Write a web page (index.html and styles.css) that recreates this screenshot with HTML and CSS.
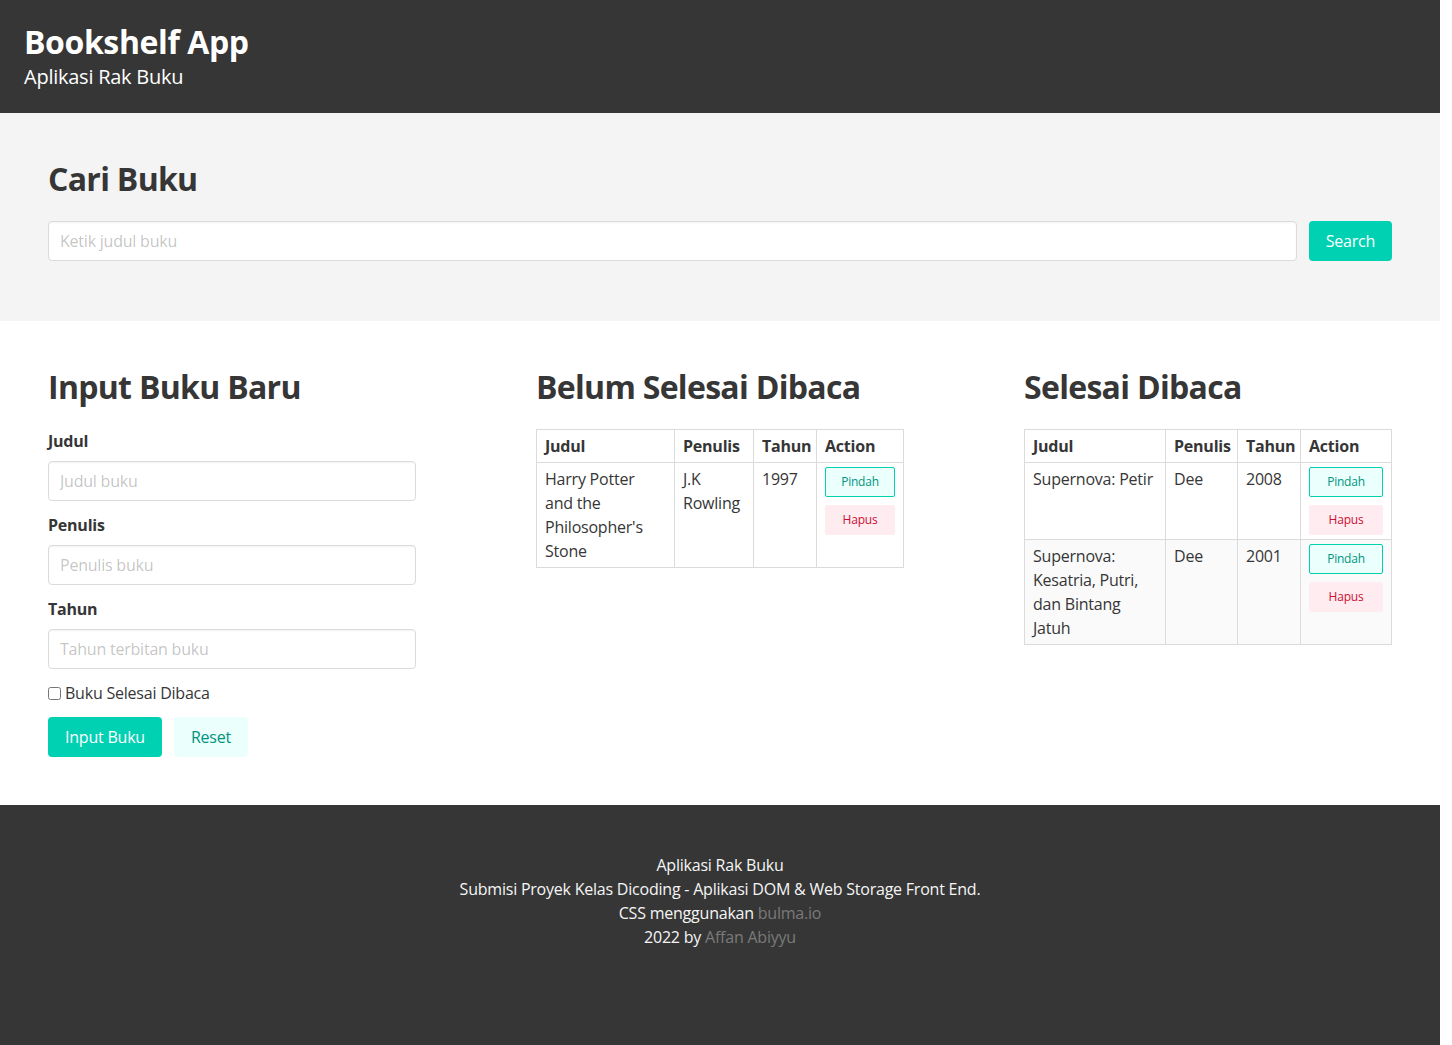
FILE: index.html
```html
<!DOCTYPE html>
<html lang="id">
<head>
<meta charset="utf-8">
<title>Bookshelf App</title>
<link rel="stylesheet" href="styles.css">
</head>
<body>
<div class="page">
  <header class="hero">
    <h1 class="hero-title">Bookshelf App</h1>
    <p class="hero-subtitle">Aplikasi Rak Buku</p>
  </header>

  <section class="search-section">
    <h2 class="title">Cari Buku</h2>
    <form class="search-form">
      <input class="input search-input" type="text" placeholder="Ketik judul buku">
      <button class="button is-primary" type="button">Search</button>
    </form>
  </section>

  <section class="main-section">
    <div class="columns">
      <div class="column">
        <h2 class="title">Input Buku Baru</h2>
        <form class="book-form">
          <div class="field">
            <label class="label">Judul</label>
            <input class="input" type="text" placeholder="Judul buku">
          </div>
          <div class="field">
            <label class="label">Penulis</label>
            <input class="input" type="text" placeholder="Penulis buku">
          </div>
          <div class="field">
            <label class="label">Tahun</label>
            <input class="input" type="number" placeholder="Tahun terbitan buku">
          </div>
          <div class="field">
            <label class="checkbox"><input type="checkbox"> Buku Selesai Dibaca</label>
          </div>
          <div class="buttons">
            <button class="button is-primary" type="button">Input Buku</button>
            <button class="button is-primary-light" type="button">Reset</button>
          </div>
        </form>
      </div>

      <div class="column">
        <h2 class="title">Belum Selesai Dibaca</h2>
        <table class="table">
          <colgroup>
            <col class="c-a1"><col class="c-a2"><col class="c-a3"><col>
          </colgroup>
          <thead>
            <tr><th>Judul</th><th>Penulis</th><th>Tahun</th><th>Action</th></tr>
          </thead>
          <tbody>
            <tr>
              <td>Harry Potter and the Philosopher's Stone</td>
              <td>J.K Rowling</td>
              <td>1997</td>
              <td><div class="actions"><button class="button is-small is-move" type="button">Pindah</button><button class="button is-small is-delete" type="button">Hapus</button></div></td>
            </tr>
          </tbody>
        </table>
      </div>

      <div class="column">
        <h2 class="title">Selesai Dibaca</h2>
        <table class="table">
          <colgroup>
            <col class="c-b1"><col class="c-b2"><col class="c-b3"><col>
          </colgroup>
          <thead>
            <tr><th>Judul</th><th>Penulis</th><th>Tahun</th><th>Action</th></tr>
          </thead>
          <tbody>
            <tr>
              <td>Supernova: Petir</td>
              <td>Dee</td>
              <td>2008</td>
              <td><div class="actions"><button class="button is-small is-move" type="button">Pindah</button><button class="button is-small is-delete" type="button">Hapus</button></div></td>
            </tr>
            <tr class="striped">
              <td>Supernova: Kesatria, Putri, dan Bintang Jatuh</td>
              <td>Dee</td>
              <td>2001</td>
              <td><div class="actions"><button class="button is-small is-move" type="button">Pindah</button><button class="button is-small is-delete" type="button">Hapus</button></div></td>
            </tr>
          </tbody>
        </table>
      </div>
    </div>
  </section>

  <footer class="footer">
    <p>Aplikasi Rak Buku</p>
    <p>Submisi Proyek Kelas Dicoding - Aplikasi DOM &amp; Web Storage Front End.</p>
    <p>CSS menggunakan <a href="#">bulma.io</a></p>
    <p>2022 by <a href="#">Affan Abiyyu</a></p>
  </footer>
</div>
</body>
</html>
```
FILE: styles.css
```css
*, *::before, *::after { box-sizing: border-box; }

html { background: #fff; }

body {
  margin: 0;
  font-family: "Open Sans", "Noto Sans", sans-serif;
  font-size: 16px;
  line-height: 24px;
  letter-spacing: -0.22px;
  color: #4a4a4a;
}

h1, h2, p { margin: 0; }

.page {
  width: 1440px;
}

/* Header */
.hero {
  background: #363636;
  padding: 24px 24px 24px;
}

.hero-title {
  color: #fff;
  font-size: 32px;
  line-height: 36px;
  font-weight: 700;
  letter-spacing: -0.4px;
}

.hero-subtitle {
  color: #fff;
  font-size: 20px;
  line-height: 25px;
  margin-top: 4px;
  letter-spacing: -0.25px;
}

.title {
  color: #363636;
  font-size: 32px;
  line-height: 36px;
  font-weight: 700;
  letter-spacing: -0.7px;
  margin-bottom: 24px;
}

/* Search */
.search-section {
  background: #f4f4f4;
  padding: 48px 48px 60px;
}

.search-form {
  display: flex;
  gap: 12px;
}

.search-input { flex: 1; }

/* Inputs */
.input {
  display: block;
  width: 100%;
  height: 40px;
  margin: 0;
  padding: 0 11px;
  border: 1px solid #dbdbdb;
  border-radius: 4px;
  background: #fff;
  box-shadow: inset 0 1px 2px rgba(10, 10, 10, 0.05);
  font: inherit;
  letter-spacing: -0.22px;
  color: #363636;
  -moz-appearance: textfield;
}

.input::-webkit-outer-spin-button,
.input::-webkit-inner-spin-button { -webkit-appearance: none; margin: 0; }

.input::placeholder { color: rgba(54, 54, 54, 0.3); }

/* Buttons */
.button {
  display: inline-flex;
  align-items: center;
  justify-content: center;
  height: 40px;
  margin: 0;
  padding: 0 16px;
  border: 1px solid transparent;
  border-radius: 4px;
  font: inherit;
  letter-spacing: -0.22px;
  cursor: pointer;
  white-space: nowrap;
}

.is-primary { background: #00d1b2; color: #fff; }
.is-primary-light { background: #ebfffc; color: #00947e; }

.button.is-small {
  height: 30px;
  font-size: 12px;
  line-height: 18px;
  border-radius: 2px;
  width: 100%;
  padding: 0 8px;
}

.is-move { background: #ebfffc; color: #00947e; border-color: #00d1b2; }
.is-delete { background: #feecf0; color: #cc0f35; }

/* Main section */
.main-section {
  background: #fff;
  padding: 48px;
}

.columns {
  display: grid;
  grid-template-columns: repeat(3, 368px);
  justify-content: space-between;
  align-items: start;
}

.field { margin-bottom: 12px; }

.label {
  display: block;
  color: #363636;
  font-weight: 700;
  margin-bottom: 8px;
}

.checkbox {
  display: flex;
  align-items: center;
  gap: 4px;
  color: #363636;
}

.checkbox input {
  width: 13px;
  height: 13px;
  margin: 0;
}

.buttons {
  display: flex;
  gap: 12px;
}

/* Tables */
.table {
  width: 100%;
  border-collapse: collapse;
  table-layout: fixed;
  background: #fff;
  color: #363636;
}

.table th,
.table td {
  border: 1px solid #dbdbdb;
  padding: 4px 8px;
  vertical-align: top;
  text-align: left;
}

.table th { font-weight: 700; }

.table .striped { background: #fafafa; }

.c-a1 { width: 138px; }
.c-a2 { width: 79px; }
.c-a3 { width: 63px; }
.c-b1 { width: 141px; }
.c-b2 { width: 72px; }
.c-b3 { width: 63px; }

.actions {
  display: flex;
  flex-direction: column;
  gap: 8px;
}

/* Footer */
.footer {
  background: #363636;
  color: #f5f5f5;
  text-align: center;
  padding: 48px 24px 96px;
}

.footer a {
  color: #7a7a7a;
  text-decoration: none;
}
```
